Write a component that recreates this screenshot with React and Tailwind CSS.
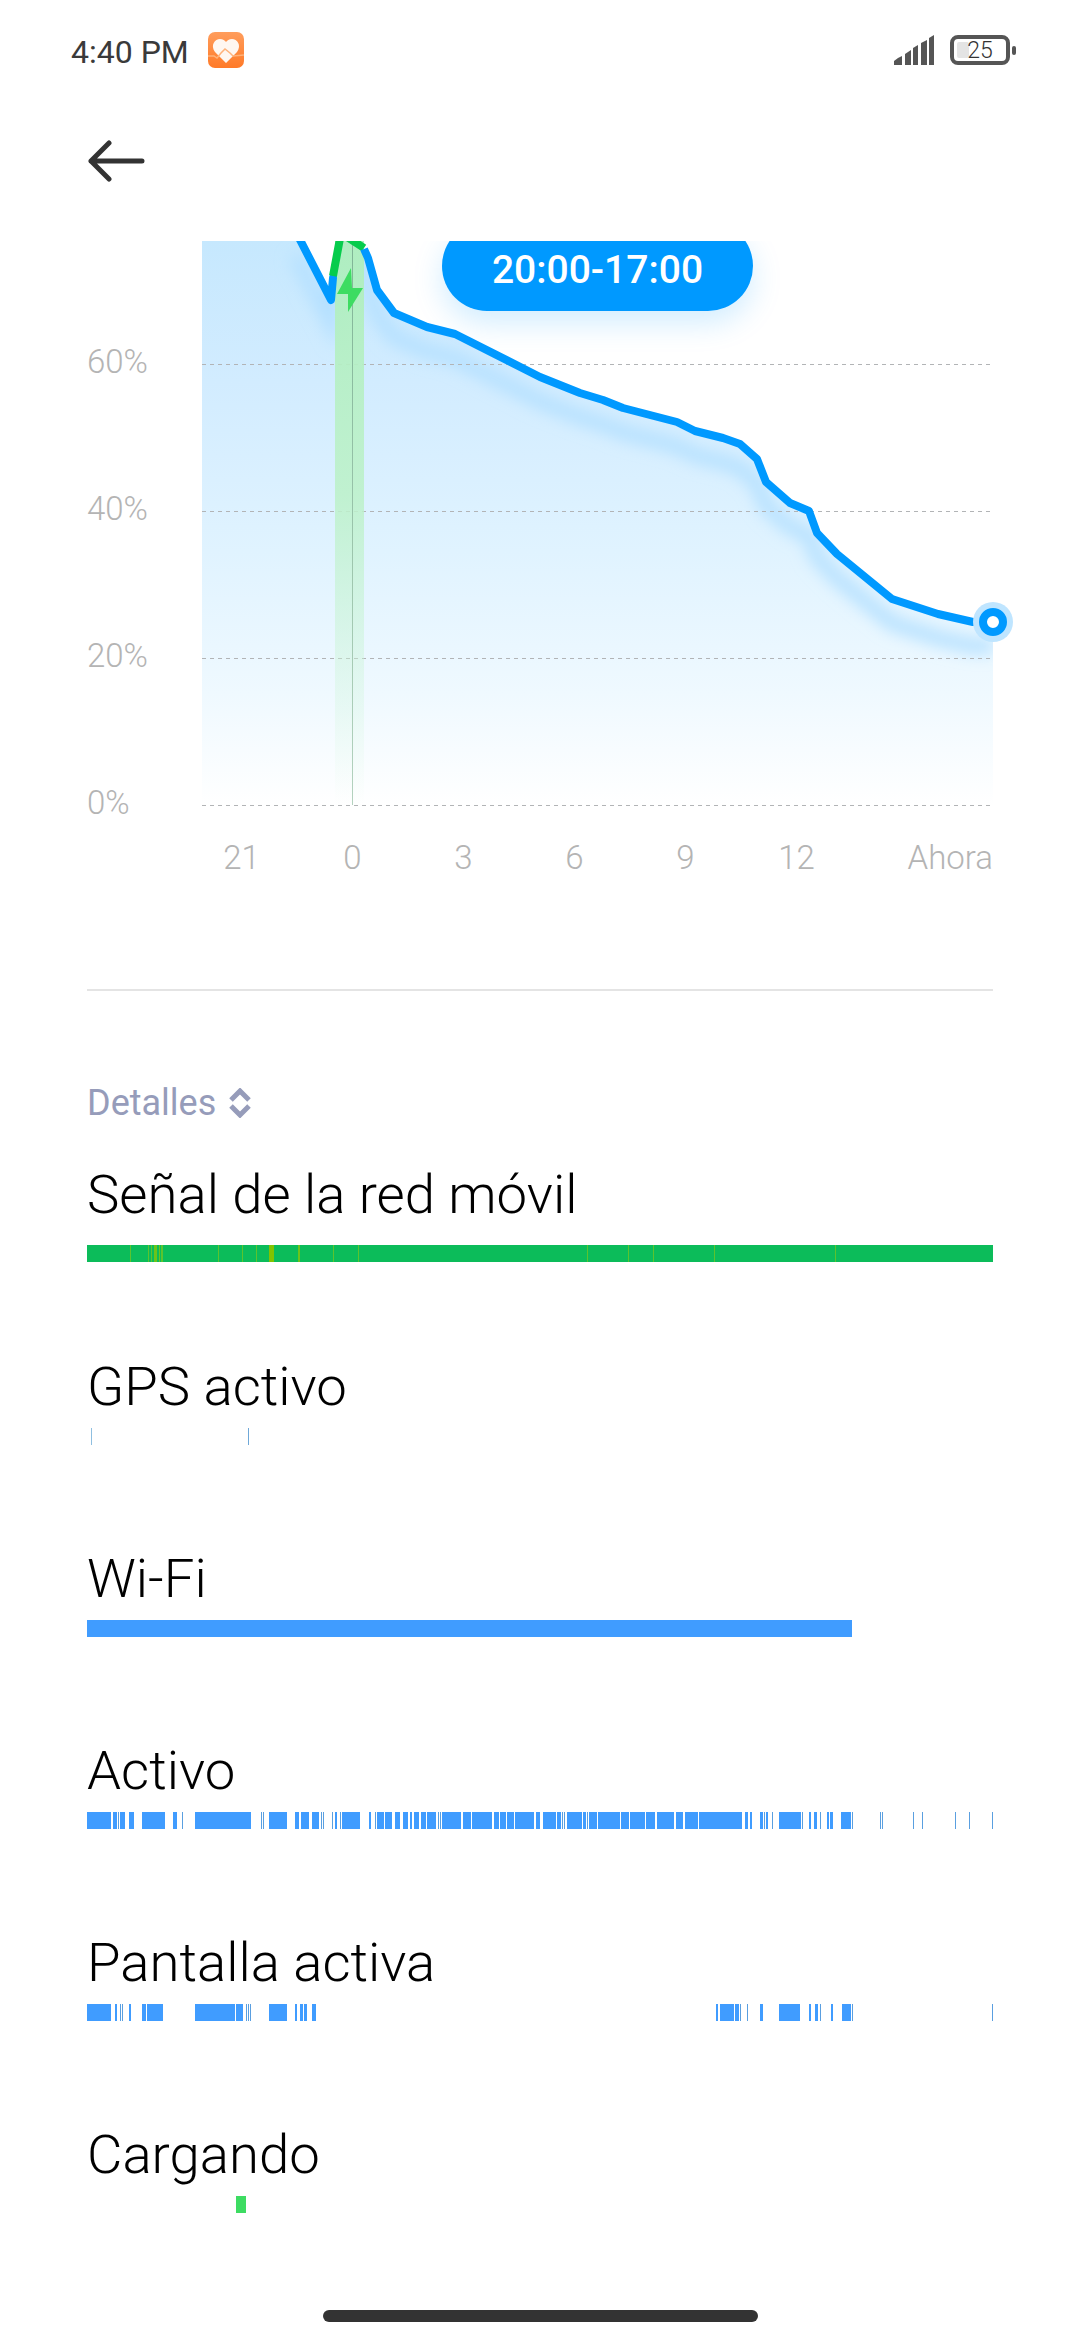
const FONT = { fontFamily: "Roboto, 'Noto Sans', sans-serif" };

const linePts = "373,290 377,290 394,313 427,327 455,334 540,377 580,393 603,400 623,408 677,422 695,431 723,438 740,444 757,459 766,482 790,503 809,511 817,533 837,554 892,599 938,614 973,622 993,622";
const blueLeft = "296,232 331,300 333,278";
const blueRight = "364,249 368,258 377,290 394,313 427,327 455,334 540,377 580,393 603,400 623,408 677,422 695,431 723,438 740,444 757,459 766,482 790,503 809,511 817,533 837,554 892,599 938,614 973,622 993,622";
const shadowLine = "296,232 331,300 333,278 341,233 364,249 377,290 394,313 427,327 455,334 540,377 580,393 603,400 623,408 677,422 695,431 723,438 740,444 757,459 766,482 790,503 809,511 817,533 837,554 892,599 938,614 973,622 993,622";
const areaPts = `202,241 300,241 331,300 333,278 339,241 350,241 364,249 ${linePts.split(" ").slice(1).join(" ")} 993,806 202,806`;

const signalLines = [
  [130, 131, "#5cc42e"], [148, 149, "#5cc42e"], [151, 152, "#5cc42e"], [154, 157, "#6cc41a"], [159, 160, "#6cc41a"], [161, 163, "#5cc42e"],
  [218, 219, "#5cc42e"], [242, 243, "#5cc42e"], [256, 257, "#5cc42e"], [269, 274, "#82c300"], [298, 300, "#6cc41a"], [333, 334, "#5cc42e"], [358, 359, "#5cc42e"],
  [587, 588, "#5cc42e"], [628, 629, "#5cc42e"], [653, 654, "#5cc42e"], [714, 715, "#5cc42e"], [835, 836, "#5cc42e"],
];

const activo = [
  [87,111],[113,117],[118,119],[120,125],[129,134],[142,165],[173,177],[182,183],[195,251],[261,262],[263,264],[269,287],[295,299],[301,309],[312,319],[321,322],[323,324],[332,333],[335,337],[340,341],[342,360],[369,371],[375,376],[377,384],[385,392],[395,400],[403,408],[410,412],[414,419],[421,426],[427,436],[438,439],[440,441],[442,461],[463,471],[472,492],[494,499],[500,506],[507,514],[515,534],[536,540],[543,556],[557,561],[562,563],[564,565],[567,582],[583,586],[587,588],[589,597],[598,620],[621,629],[630,645],[646,655],[657,674],[676,683],[685,698],[699,742],[745,748],[750,752],[760,763],[764,765],[766,768],[772,773],[779,801],[802,803],[809,811],[814,817],[820,821],[827,829],[830,833],[841,851],[852,853],[880,881],[882,883],[913,914],[922,923],[955,956],[969,970],[992,993],
];
const pantalla = [
  [87,111],[115,117],[120,121],[122,123],[129,131],[142,146],[147,163],[195,235],[236,243],[246,247],[248,249],[250,251],[269,287],[295,297],[300,303],[304,307],[312,316],[716,718],[720,734],[735,739],[740,741],[747,748],[760,763],[779,800],[809,811],[815,818],[820,821],[831,833],[842,851],[852,853],[992,993],
];

function Bar({ segments, base }) {
  return (
    <svg className="block w-[906px] h-[17px]" viewBox="87 0 906 17" shapeRendering="crispEdges">
      {base && <rect x="87" y="0" width="906" height="17" fill={base} />}
      {segments.map(([a, b, c], i) => (
        <rect key={i} x={a} y="0" width={b - a} height="17" fill={c || (b - a <= 1 ? "#5a9fe0" : "#409cff")} />
      ))}
    </svg>
  );
}

function Row({ title, first, children }) {
  return (
    <div className="h-[192px]">
      <div className="h-[76px] leading-[76px] text-[54.5px] font-light text-black">{title}</div>
      <div className={first ? "mt-[13px]" : "mt-[4px]"}>{children}</div>
    </div>
  );
}

function HealthIcon() {
  return (
    <svg width="36" height="36" viewBox="0 0 36 36">
      <defs>
        <linearGradient id="hg" x1="0" y1="0" x2="0" y2="1">
          <stop offset="0" stopColor="#ff9d5c" />
          <stop offset="1" stopColor="#ff7a28" />
        </linearGradient>
      </defs>
      <rect width="36" height="36" rx="7" fill="url(#hg)" />
      <path d="M18 31 L7 20 C2 13 7 7 12 7 C15 7 17 8.500 18 10 C19 8.500 21 7 24 7 C29 7 34 13 29 20 Z" fill="#fff7f1" />
      <path d="M0 24 L6 24 L9 26 L13 21 L17 17 L22 21 L25 24 L36 23" fill="none" stroke="#ffb27a" strokeWidth="1.500" />
    </svg>
  );
}

function Chart() {
  return (
    <svg className="block w-[878px] h-[570px] shrink-0" viewBox="202 241 878 570">
      <defs>
        <linearGradient id="area" x1="0" y1="241" x2="0" y2="806" gradientUnits="userSpaceOnUse">
          <stop offset="0" stopColor="#c6e8fe" />
          <stop offset="0.25" stopColor="#d2ecff" />
          <stop offset="0.55" stopColor="#e0f3ff" />
          <stop offset="0.8" stopColor="#eff9ff" />
          <stop offset="1" stopColor="#ffffff" />
        </linearGradient>
        <linearGradient id="band" x1="0" y1="241" x2="0" y2="806" gradientUnits="userSpaceOnUse">
          <stop offset="0" stopColor="#aeeebd" stopOpacity="0.95" />
          <stop offset="0.45" stopColor="#bdf1cb" stopOpacity="0.9" />
          <stop offset="1" stopColor="#d5f7de" stopOpacity="0" />
        </linearGradient>
        <linearGradient id="vline" x1="0" y1="241" x2="0" y2="806" gradientUnits="userSpaceOnUse">
          <stop offset="0" stopColor="#7fb596" />
          <stop offset="1" stopColor="#b4d2bf" />
        </linearGradient>
        <filter id="blur" x="-10%" y="-10%" width="120%" height="130%">
          <feGaussianBlur stdDeviation="8" />
        </filter>
        <clipPath id="areaClip">
          <polygon points={areaPts} />
        </clipPath>
      </defs>
      <polygon points={areaPts} fill="url(#area)" />
      <g clipPath="url(#areaClip)">
        <polyline points={shadowLine} transform="translate(0 24)" fill="none" stroke="#b4e0ff" strokeWidth="14" filter="url(#blur)" />
      </g>
      {[364, 511, 658, 805].map((y) => (
        <line key={y} x1="202" x2="990" y1={y + 0.5} y2={y + 0.5} stroke="#b2b4b6" strokeWidth="1" strokeDasharray="4 4" />
      ))}
      <rect x="335" y="241" width="29" height="565" fill="url(#band)" />
      <line x1="352.500" x2="352.500" y1="241" y2="805" stroke="url(#vline)" strokeWidth="1" />
      <polyline points={blueLeft} fill="none" stroke="#0099ff" strokeWidth="8" strokeLinejoin="round" strokeLinecap="round" />
      <polyline points="333,276 341,233 364,248" fill="none" stroke="#06cc4c" strokeWidth="8" strokeLinejoin="round" />
      <polyline points={blueRight} fill="none" stroke="#0099ff" strokeWidth="8" strokeLinejoin="round" />
      <polygon points="351,268 337,294 348,294 348,312 363,288 352,288" fill="#3ddc62" />
      <circle cx="993" cy="622" r="20" fill="#bfe5ff" />
      <circle cx="993" cy="622" r="10" fill="#ffffff" stroke="#0099ff" strokeWidth="8" />
    </svg>
  );
}

export default function App() {
  return (
    <div className="w-[1080px] h-[2340px] bg-white overflow-hidden flex flex-col" style={FONT}>
      {/* status bar */}
      <div className="h-[100px] flex items-center justify-between pl-[71px] pr-[64px] shrink-0">
        <div className="flex items-center gap-[19px]">
          <span className="text-[32px] leading-none text-[#3a3a3a] pt-[3px]">4:40 PM</span>
          <HealthIcon />
        </div>
        <div className="flex items-center gap-[15px]">
          <svg width="41" height="30" viewBox="0 0 41 30" fill="#555555">
            <path d="M0 30 L0 26 Q3 23 8 21 L8 30 Z" />
            <path d="M11 30 L11 19 L17 15 L17 30 Z" />
            <path d="M19 30 L19 13 L24 10 L24 30 Z" />
            <path d="M27 30 L27 8 L33 5 L33 30 Z" />
            <path d="M35 30 L35 3 L40 0 L40 30 Z" />
          </svg>
          <div className="flex items-center gap-[2px]">
            <div className="relative w-[60px] h-[30px] rounded-[8px] border-[4px] border-[#555555] flex items-center justify-center">
              <div className="absolute left-[3px] top-[3px] bottom-[3px] w-[12px] bg-[#e4e4e4] rounded-[2px]" />
              <span className="relative text-[23px] font-light leading-none text-[#333333]">25</span>
            </div>
            <div className="w-[4px] h-[9px] rounded-full bg-[#555555]" />
          </div>
        </div>
      </div>
      {/* back row */}
      <div className="h-[141px] pl-[87px] pt-[40px] shrink-0">
        <svg width="60" height="42" viewBox="0 0 60 42" fill="none" stroke="#333333" strokeWidth="5" strokeLinecap="round" strokeLinejoin="round">
          <path d="M4 21 H55 M22 3 L4 21 L22 39" />
        </svg>
      </div>
      {/* chart */}
      <div className="relative h-[748px] overflow-hidden shrink-0">
        <div className="flex pl-[87px] h-[570px]">
          <div className="w-[115px] shrink-0 pt-[47px] flex flex-col text-[33px] font-light text-[#b4b4b4]">
            <div className="h-[147px] shrink-0 flex items-center">60%</div>
            <div className="h-[147px] shrink-0 flex items-center">40%</div>
            <div className="h-[147px] shrink-0 flex items-center">20%</div>
            <div className="h-[147px] shrink-0 flex items-center">0%</div>
          </div>
          <Chart />
        </div>
        <div className="flex items-center pl-[186px] pr-[87px] mt-[27px] h-[40px] text-[33px] font-light text-[#b4b4b4]">
          {["21", "0", "3", "6", "9", "12"].map((t) => (
            <span key={t} className="w-[111px] text-center">{t}</span>
          ))}
          <span className="flex-1 text-right">Ahora</span>
        </div>
        <div className="absolute left-[442px] top-[-20px] w-[311px] h-[90px] rounded-[45px] bg-[#0099ff] flex items-center justify-center pt-[9px] text-white text-[39px] font-medium shadow-[0_12px_30px_rgba(0,153,255,0.18)]">
          20:00-17:00
        </div>
      </div>
      {/* details */}
      <div className="px-[87px] flex-1">
        <div className="h-[2px] bg-[#e4e4e4]" />
        <div className="mt-[94px] h-[36px] flex items-center gap-[13px] text-[36px] text-[#969cba]">
          <span className="leading-none">Detalles</span>
          <svg width="22" height="30" viewBox="0 0 22 30" fill="none" stroke="#969cba" strokeWidth="5" strokeLinejoin="miter">
            <path d="M2 12 L11 3 L20 12 M2 18 L11 27 L20 18" />
          </svg>
        </div>
        <div className="mt-[35px]">
          <Row title="Señal de la red móvil" first>
            <Bar base="#0cbc5a" segments={signalLines} />
          </Row>
          <Row title="GPS activo">
            <Bar segments={[[91, 92, "#8fbfe0"], [248, 249, "#6fa8d8"]]} />
          </Row>
          <Row title="Wi-Fi">
            <Bar segments={[[87, 852]]} />
          </Row>
          <Row title="Activo">
            <Bar segments={activo} />
          </Row>
          <Row title="Pantalla activa">
            <Bar segments={pantalla} />
          </Row>
          <Row title="Cargando">
            <Bar segments={[[236, 246, "#3ddc62"]]} />
          </Row>
        </div>
      </div>
      {/* home indicator */}
      <div className="h-[30px] shrink-0 flex justify-center">
        <div className="w-[435px] h-[12px] rounded-full bg-[#333333]" />
      </div>
    </div>
  );
}
